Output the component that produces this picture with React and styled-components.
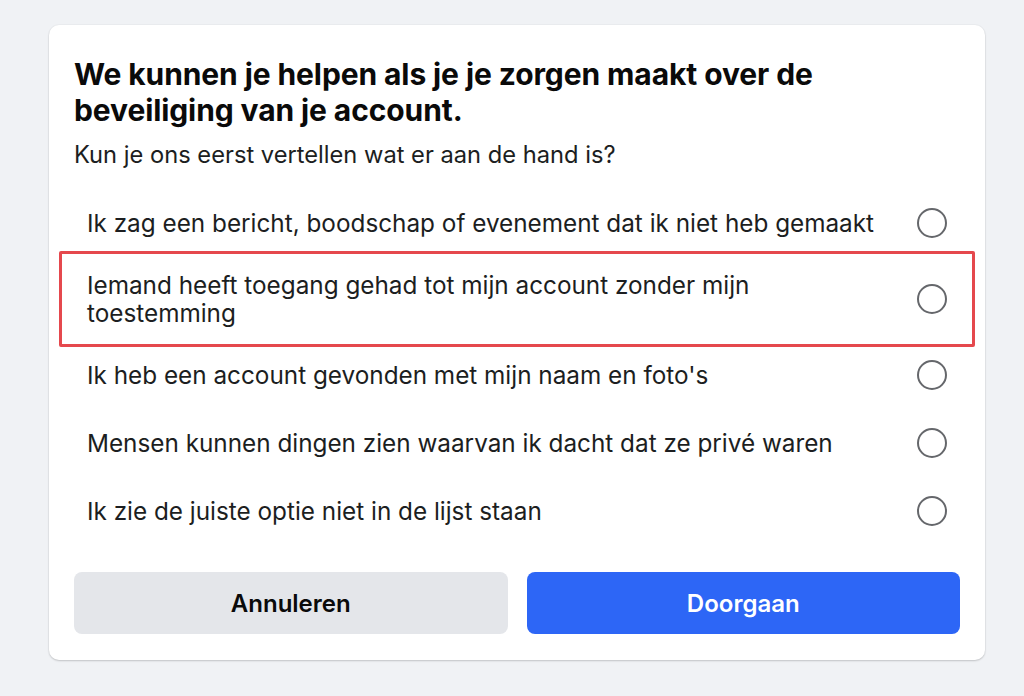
import React from "react";
import styled, { createGlobalStyle } from "styled-components";

const Global = createGlobalStyle`
  html, body { margin: 0; padding: 0; background: #f0f2f5; }
  body { font-family: Inter, "Noto Sans", "Liberation Sans", sans-serif; color: #1c1e21; }
  * { box-sizing: border-box; }
`;

const Page = styled.div`
  width: 1024px;
  height: 696px;
  padding: 25px 39px 0 49px;
  background: #f0f2f5;
`;

const Card = styled.div`
  width: 936px;
  background: #ffffff;
  border-radius: 10px;
  box-shadow: 0 1px 2px rgba(0, 0, 0, 0.18), 0 0 0 1px rgba(0, 0, 0, 0.02);
  padding: 31px 25px 26px 25px;
  display: flex;
  flex-direction: column;
`;

const Title = styled.h1`
  margin: 0;
  font-size: 30px;
  line-height: 36px;
  font-weight: 700;
  color: #0a0a0a;
  letter-spacing: -0.1px;
`;

const Subtitle = styled.p`
  margin: 13px 0 0 0;
  font-size: 23.7px;
  line-height: 28px;
  color: #1c1e21;
`;

const Options = styled.div`
  margin-top: 20px;
  display: flex;
  flex-direction: column;
`;

const OptionRow = styled.label`
  position: relative;
  min-height: 68px;
  padding: 14px 13px;
  display: flex;
  align-items: center;
  justify-content: space-between;
  gap: 24px;
  cursor: pointer;

  &::after {
    content: "";
    display: ${(p) => (p.$highlight ? "block" : "none")};
    position: absolute;
    top: -6px;
    bottom: -6px;
    left: -15px;
    right: -15px;
    border: 3px solid #e5484d;
    border-radius: 2px;
    pointer-events: none;
  }
`;

const OptionText = styled.span`
  font-size: 24.3px;
  line-height: 28px;
  color: #1c1e21;
  max-width: 800px;
`;

const Radio = styled.span`
  flex: none;
  width: 30px;
  height: 30px;
  border-radius: 50%;
  border: 2px solid #65676b;
  background: #fff;
`;

const Buttons = styled.div`
  margin-top: 27px;
  display: grid;
  grid-template-columns: 1fr 1fr;
  gap: 19px;
`;

const Button = styled.button`
  height: 62px;
  border: none;
  border-radius: 8px;
  font-family: inherit;
  font-size: 24px;
  font-weight: 600;
  background: ${(p) => (p.$primary ? "#2d66f6" : "#e4e6ea")};
  color: ${(p) => (p.$primary ? "#ffffff" : "#0a0a0a")};
  cursor: pointer;
`;

const options = [
  { text: "Ik zag een bericht, boodschap of evenement dat ik niet heb gemaakt" },
  { text: "Iemand heeft toegang gehad tot mijn account zonder mijn toestemming", highlight: true },
  { text: "Ik heb een account gevonden met mijn naam en foto's" },
  { text: "Mensen kunnen dingen zien waarvan ik dacht dat ze privé waren" },
  { text: "Ik zie de juiste optie niet in de lijst staan" },
];

export default function App() {
  return (
    <>
      <Global />
      <Page>
        <Card>
          <Title>
            We kunnen je helpen als je je zorgen maakt over de
            <br />
            beveiliging van je account.
          </Title>
          <Subtitle>Kun je ons eerst vertellen wat er aan de hand is?</Subtitle>
          <Options>
            {options.map((o) => (
              <OptionRow key={o.text} $highlight={o.highlight}>
                <OptionText>{o.text}</OptionText>
                <Radio />
              </OptionRow>
            ))}
          </Options>
          <Buttons>
            <Button>Annuleren</Button>
            <Button $primary>Doorgaan</Button>
          </Buttons>
        </Card>
      </Page>
    </>
  );
}
